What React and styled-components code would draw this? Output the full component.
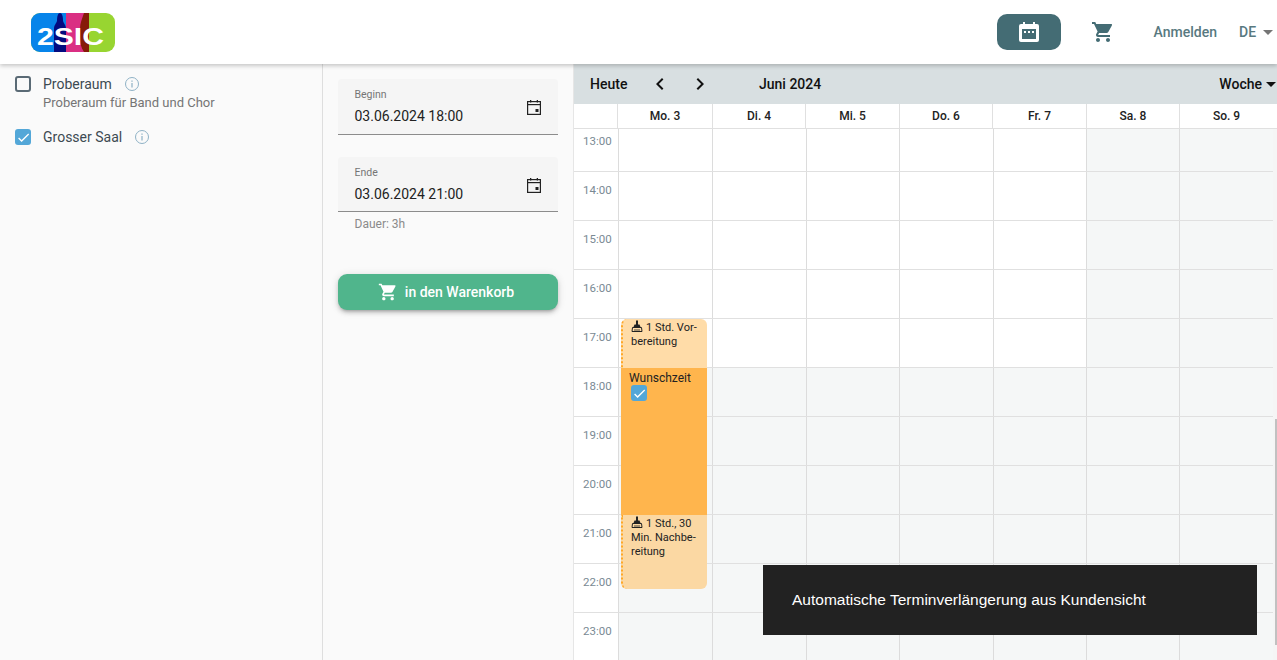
import React from "react";
import styled, { createGlobalStyle } from "styled-components";
import { MdShoppingCart, MdChevronLeft, MdChevronRight, MdCheck } from "react-icons/md";

const GlobalStyle = createGlobalStyle`
  html, body {
    margin: 0;
    height: 100%;
    overflow: hidden;
    background: #fafafa;
    font-family: Roboto, "Liberation Sans", sans-serif;
  }
  * { box-sizing: border-box; }
`;

const Page = styled.div`
  width: 1277px;
  height: 660px;
  display: flex;
  flex-direction: column;
  overflow: hidden;
`;

const Header = styled.header`
  height: 64px;
  flex: none;
  background: #fff;
  display: flex;
  align-items: center;
  padding-left: 31px;
  box-shadow: 0 2px 4px rgba(0, 0, 0, 0.2);
  position: relative;
  z-index: 2;
`;

const LogoSvg = styled.svg`
  width: 84px;
  height: 39px;
  display: block;
`;

const HeaderRight = styled.div`
  margin-left: auto;
  display: flex;
  align-items: center;
`;

const CalendarButton = styled.div`
  width: 64px;
  height: 36px;
  border-radius: 10px;
  background: #446c74;
  display: flex;
  align-items: center;
  justify-content: center;
  margin-right: 30px;
`;

const CartLink = styled.div`
  width: 24px;
  height: 24px;
  color: #446c74;
  font-size: 24px;
  display: flex;
  margin-right: 39px;
`;

const HeaderLink = styled.span`
  font-size: 14px;
  font-weight: 500;
  color: #58797f;
`;

const Lang = styled(HeaderLink)`
  margin-left: 22px;
  display: flex;
  align-items: center;
  width: 38px;
  gap: 7px;
`;

const Caret = styled.i`
  width: 0;
  height: 0;
  border-left: 5px solid transparent;
  border-right: 5px solid transparent;
  border-top: 5px solid ${(p) => p.$color || "#757575"};
`;

const Main = styled.div`
  flex: 1;
  display: flex;
  min-height: 0;
`;

const Sidebar = styled.aside`
  width: 323px;
  flex: none;
  border-right: 1px solid #dedede;
  padding: 10px 15px;
`;

const Resource = styled.div`
  display: flex;
  align-items: flex-start;
  margin-bottom: 16px;
`;

const ResourceText = styled.div`
  margin-left: 12px;
  font-size: 14px;
  color: #3d4a52;
  line-height: 20px;
`;

const ResourceName = styled.div`
  display: flex;
  align-items: center;
  gap: 12px;
`;

const ResourceHint = styled.div`
  font-size: 13px;
  line-height: 17px;
  color: #757575;
`;

const Box = styled.span`
  width: 16px;
  height: 16px;
  border-radius: 3px;
  margin-top: 2px;
  flex: none;
  display: flex;
  align-items: center;
  justify-content: center;
  color: #fff;
  font-size: 15px;
  background: ${(p) => (p.$checked ? "#53a7d8" : "transparent")};
  border: ${(p) => (p.$checked ? "none" : "2px solid #5a6a75")};
`;

const InfoSvg = styled.svg`
  width: 16px;
  height: 16px;
  display: block;
`;

const Booking = styled.section`
  width: 251px;
  flex: none;
  padding: 15px 15px 0;
  border-right: 1px solid #e6e6e6;
`;

const DateField = styled.div`
  height: ${(p) => p.$height}px;
  background: #f5f5f5;
  border-radius: 4px 4px 0 0;
  border-bottom: 1px solid #8c8c8c;
  padding: 10px 16px 0 16.5px;
  position: relative;
`;

const DateLabel = styled.div`
  font-size: 10.5px;
  line-height: 12px;
  color: #757575;
`;

const DateValue = styled.div`
  font-size: 14px;
  line-height: 20px;
  margin-top: 5px;
  color: #222;
`;

const DateIcon = styled.svg`
  position: absolute;
  right: 16px;
  top: 20px;
  width: 16px;
  height: 16px;
`;

const FieldGap = styled.div`
  height: 22px;
`;

const Duration = styled.div`
  font-size: 12px;
  line-height: 14px;
  margin: 5px 0 0 16.5px;
  color: #8a8a8a;
`;

const CartButton = styled.button`
  width: 220px;
  height: 36px;
  margin-top: 43px;
  border: none;
  border-radius: 9px;
  background: #50b58c;
  color: #fff;
  font: 500 14px Roboto, sans-serif;
  display: flex;
  align-items: center;
  justify-content: center;
  gap: 7px;
  padding: 0 4px 0 0;
  box-shadow: 0 3px 3px -2px rgba(0, 0, 0, 0.2), 0 3px 4px rgba(0, 0, 0, 0.14),
    0 1px 8px rgba(0, 0, 0, 0.12);
  svg {
    font-size: 20px;
  }
`;

const Calendar = styled.section`
  flex: 1;
  min-width: 0;
  display: flex;
  flex-direction: column;
  position: relative;
  background: #fff;
`;

const Toolbar = styled.div`
  height: 40px;
  flex: none;
  background: #d8dfe1;
  display: flex;
  align-items: center;
  font-size: 14px;
  font-weight: 500;
  color: #111;
  padding: 0 1px 0 16px;
`;

const Today = styled.span`
  width: 54px;
`;

const Arrow = styled.span`
  width: 40px;
  display: flex;
  justify-content: center;
  font-size: 24px;
  margin-left: ${(p) => (p.$first ? "-4px" : 0)};
`;

const Month = styled.span`
  margin-left: 39px;
`;

const ViewSelect = styled.span`
  margin-left: auto;
  display: flex;
  align-items: center;
  gap: 4px;
`;

const DayRow = styled.div`
  display: grid;
  grid-template-columns: 43px 95px 93px 94px 93px 94px 93px 94px;
  height: 25px;
  flex: none;
  border-bottom: 1px solid #e0e0e0;
`;

const DayCell = styled.div`
  border-left: 1px solid #e0e0e0;
  font-size: 12px;
  font-weight: 500;
  line-height: 24px;
  text-align: center;
  color: #222;
  &:first-child {
    border-left: none;
  }
`;

const Scroller = styled.div`
  flex: 1;
  min-height: 0;
  position: relative;
  overflow: hidden;
`;

const HourRow = styled.div`
  display: grid;
  grid-template-columns: 44px 94px 94px 93px 94px 93px 93px 94px;
  height: ${(p) => p.$height}px;
  border-bottom: 1px solid #e0e0e0;
`;

const TimeCell = styled.div`
  font-size: 11.5px;
  color: #7a8a94;
  padding: ${(p) => p.$top}px 0 0 9px;
  line-height: 14px;
`;

const SlotCell = styled.div`
  border-left: 1px solid #dcdcdc;
  background: ${(p) => (p.$closed ? "#f5f7f7" : "#fff")};
`;

const Track = styled.div`
  position: absolute;
  right: 0;
  top: 0;
  bottom: 0;
  width: 4px;
  background: #f5f5f5;
  &::after {
    content: "";
    position: absolute;
    right: 0;
    width: 2px;
    top: 290px;
    height: 226px;
    background: #c1c1c1;
  }
`;

const CalEvent = styled.div`
  position: absolute;
  left: 47px;
  width: 86px;
  top: ${(p) => p.$top}px;
  height: ${(p) => p.$height}px;
  background: ${(p) => p.$bg};
  border-radius: ${(p) => p.$radius};
  border-left: ${(p) => (p.$dotted ? "2px dotted #ffa726" : "none")};
  padding: ${(p) => (p.$dotted ? "1px 8px 0 8px" : "3px 8px")};
  font-size: 11px;
  line-height: 14px;
  color: #222;
`;

const WishLabel = styled.div`
  font-size: 12px;
  line-height: 14px;
  color: #222;
`;

const WishBox = styled(Box)`
  margin: 0 0 0 2px;
`;

const BroomSvg = styled.svg`
  width: 12px;
  height: 12px;
  vertical-align: -1px;
  margin-right: 3px;
`;

const Snackbar = styled.div`
  position: absolute;
  left: 763px;
  top: 565px;
  width: 494px;
  height: 70px;
  background: rgba(30, 30, 30, 0.98);
  color: #fff;
  font: 15.5px/69px "Liberation Sans", Arial, sans-serif;
  padding-left: 29px;
  z-index: 3;
`;

const Logo = () => (
  <LogoSvg viewBox="0 0 84 39">
    <rect x="0" y="0" width="84" height="39" rx="9" fill="#98d531" />
    <path d="M9 0H58V39H9a9 9 0 0 1-9-9V9a9 9 0 0 1 9-9z" fill="#0784ea" />
    <rect x="35" y="0" width="18" height="39" fill="#da2f83" />
    <path d="M23 39V16c0-4 2-5 3-8 0-5 1-8 3-8s3 3 3 8c1 3 3 4 3 8v23z" fill="#040b80" />
    <path d="M53 0h5v39h-5c-3-4-4-9-4-15v-8c0-6 2-10 4-16z" fill="#861b09" />
    <text x="6" y="32" fill="#fff" fontFamily="'Liberation Sans', sans-serif" fontWeight="700" fontSize="24" textLength="67" lengthAdjust="spacingAndGlyphs">2SIC</text>
  </LogoSvg>
);

const Info = () => (
  <InfoSvg viewBox="0 0 16 16" fill="none">
    <circle cx="8" cy="8" r="6.5" stroke="#8fb2c6" strokeWidth="1" />
    <rect x="7.4" y="7" width="1.2" height="4.5" fill="#8fb2c6" />
    <rect x="7.4" y="4.5" width="1.2" height="1.3" fill="#8fb2c6" />
  </InfoSvg>
);

const EventIcon = () => (
  <DateIcon viewBox="0 0 16 16">
    <rect x="1.6" y="2.6" width="12.8" height="12.8" fill="none" stroke="#222" strokeWidth="1.2" />
    <rect x="1" y="5" width="14" height="1.2" fill="#222" />
    <rect x="4" y="1" width="1.3" height="2.5" fill="#222" />
    <rect x="10.7" y="1" width="1.3" height="2.5" fill="#222" />
    <rect x="9.5" y="10" width="3" height="3" fill="#222" />
  </DateIcon>
);

const Broom = () => (
  <BroomSvg viewBox="0 0 12 12">
    <rect x="5" y="0.5" width="2" height="4.5" fill="#222" />
    <path d="M3.5 4.5h5l1 2.5h-7z" fill="#222" />
    <path d="M1.5 7.5h9l.5 4H1z" fill="none" stroke="#222" strokeWidth="1" />
    <path d="M4 9v2.5M6 9v2.5M8 9v2.5" stroke="#222" strokeWidth="0.8" />
  </BroomSvg>
);

const days = ["Mo. 3", "Di. 4", "Mi. 5", "Do. 6", "Fr. 7", "Sa. 8", "So. 9"];
const hours = ["13:00", "14:00", "15:00", "16:00", "17:00", "18:00", "19:00", "20:00", "21:00", "22:00", "23:00"];

export default function App() {
  return (
    <Page>
      <GlobalStyle />
      <Header>
        <Logo />
        <HeaderRight>
          <CalendarButton>
            <svg width="20" height="20" viewBox="0 0 20 20">
              <path d="M4 0h2v2h8V0h2v2h2a2 2 0 0 1 2 2v14a2 2 0 0 1-2 2H2a2 2 0 0 1-2-2V4a2 2 0 0 1 2-2h2z" fill="#fff" />
              <rect x="3" y="7" width="14" height="10" fill="#446c74" />
              <rect x="5" y="9" width="2" height="2" fill="#fff" />
              <rect x="9" y="9" width="2" height="2" fill="#fff" />
              <rect x="13" y="9" width="2" height="2" fill="#fff" />
            </svg>
          </CalendarButton>
          <CartLink><MdShoppingCart /></CartLink>
          <HeaderLink>Anmelden</HeaderLink>
          <Lang>DE <Caret /></Lang>
        </HeaderRight>
      </Header>
      <Main>
        <Sidebar>
          <Resource>
            <Box />
            <ResourceText>
              <ResourceName>Proberaum <Info /></ResourceName>
              <ResourceHint>Proberaum für Band und Chor</ResourceHint>
            </ResourceText>
          </Resource>
          <Resource>
            <Box $checked><MdCheck /></Box>
            <ResourceText>
              <ResourceName>Grosser Saal <Info /></ResourceName>
            </ResourceText>
          </Resource>
        </Sidebar>
        <Booking>
          <DateField $height={56}>
            <DateLabel>Beginn</DateLabel>
            <DateValue>03.06.2024 18:00</DateValue>
            <EventIcon />
          </DateField>
          <FieldGap />
          <DateField $height={55}>
            <DateLabel>Ende</DateLabel>
            <DateValue>03.06.2024 21:00</DateValue>
            <EventIcon />
          </DateField>
          <Duration>Dauer: 3h</Duration>
          <CartButton><MdShoppingCart /> in den Warenkorb</CartButton>
        </Booking>
        <Calendar>
          <Toolbar>
            <Today>Heute</Today>
            <Arrow $first><MdChevronLeft /></Arrow>
            <Arrow><MdChevronRight /></Arrow>
            <Month>Juni 2024</Month>
            <ViewSelect>Woche <Caret $color="#111" /></ViewSelect>
          </Toolbar>
          <DayRow>
            <DayCell />
            {days.map((d) => <DayCell key={d}>{d}</DayCell>)}
          </DayRow>
          <Scroller>
            {hours.map((h, i) => (
              <HourRow key={h} $height={i === 0 ? 43 : 49}>
                <TimeCell $top={i === 0 ? 5 : 11}>{h}</TimeCell>
                {days.map((d, j) => (
                  <SlotCell key={d} $closed={j >= 5 || i >= 5} />
                ))}
              </HourRow>
            ))}
            <CalEvent $top={190} $height={49} $bg="#ffdca8" $radius="6px 6px 0 0" $dotted>
              <Broom />1 Std. Vor-<br />bereitung
            </CalEvent>
            <CalEvent $top={239} $height={147} $bg="#ffb54d" $radius="0">
              <WishLabel>Wunschzeit</WishLabel>
              <WishBox $checked><MdCheck /></WishBox>
            </CalEvent>
            <CalEvent $top={386} $height={74} $bg="#fbd8a3" $radius="0 0 6px 6px" $dotted>
              <Broom />1 Std., 30<br />Min. Nachbe-<br />reitung
            </CalEvent>
            <Track />
          </Scroller>
        </Calendar>
      </Main>
      <Snackbar>Automatische Terminverlängerung aus Kundensicht</Snackbar>
    </Page>
  );
}
